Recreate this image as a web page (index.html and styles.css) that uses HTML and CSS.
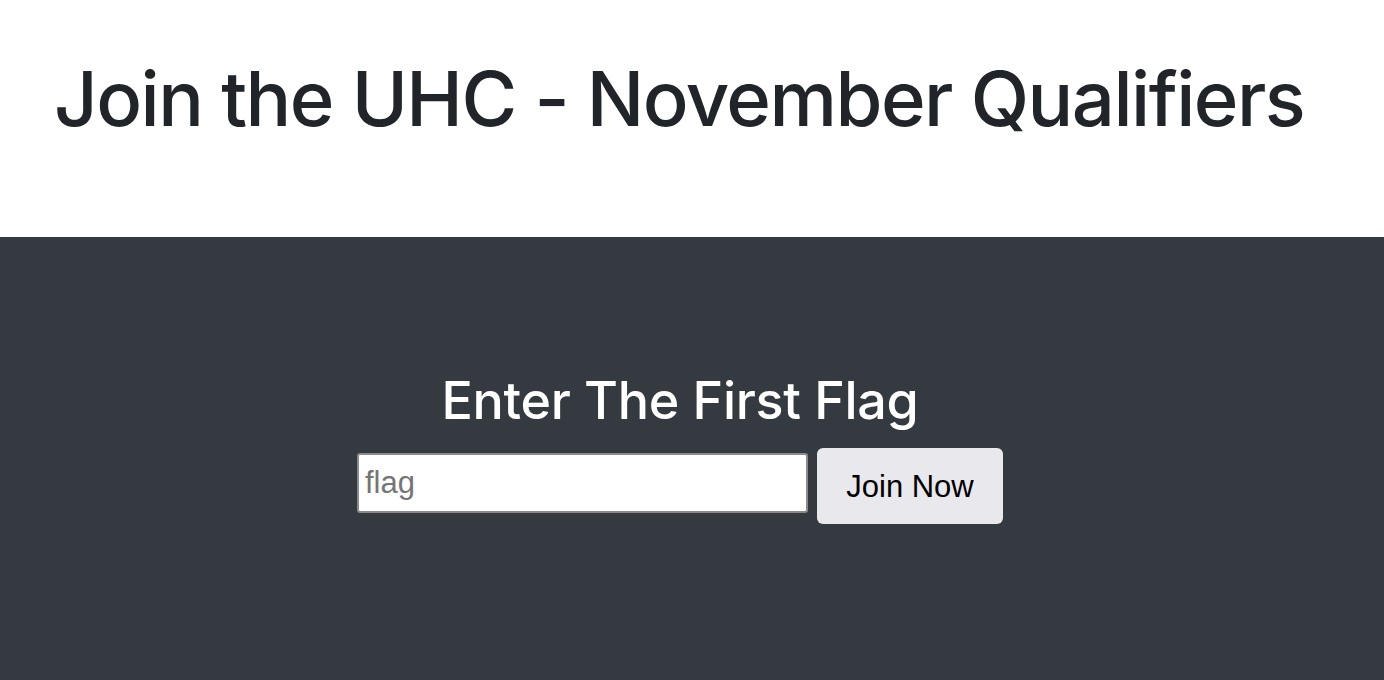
FILE: index.html
```html
<!DOCTYPE html>
<html>
<head>
<meta charset="utf-8">
<link rel="stylesheet" href="styles.css">
</head>
<body>
<header class="top">
  <h1 class="title">Join the UHC - November Qualifiers</h1>
</header>
<section class="band">
  <h2 class="prompt">Enter The First Flag</h2>
  <form class="form">
    <input class="field" type="text" placeholder="flag">
    <button class="btn" type="button">Join Now</button>
  </form>
</section>
</body>
</html>
```
FILE: styles.css
```css
html, body {
  margin: 0;
  padding: 0;
  background: #fff;
  font-family: Inter, "Noto Sans", sans-serif;
}
.top {
  height: 237px;
  padding: 0 0 0 54px;
  box-sizing: border-box;
}
.title {
  margin: 0;
  padding-top: 60px;
  font-size: 76px;
  font-weight: 500;
  line-height: 1;
  color: #212529;
  letter-spacing: -1.52px;
  white-space: nowrap;
}
.band {
  background: #343a40;
  height: 443px;
  display: flex;
  flex-direction: column;
  align-items: center;
  padding: 133px 24px 0 0;
  box-sizing: border-box;
}
.prompt {
  margin: 0;
  font-size: 52px;
  font-weight: 500;
  line-height: 1.2;
  color: #fff;
  letter-spacing: -0.3px;
}
.form {
  display: flex;
  align-items: flex-start;
  gap: 9px;
  margin-top: 16px;
}
.field {
  width: 451px;
  height: 60px;
  margin-top: 5px;
  box-sizing: border-box;
  border: 2px solid #8a8a8e;
  border-radius: 3px;
  padding: 0 6px;
  font-family: "Liberation Sans", Arial, sans-serif;
  font-size: 31px;
  color: #000;
  background: #fff;
}
.field::placeholder {
  color: #757575;
}
.btn {
  width: 186px;
  height: 76px;
  border: none;
  border-radius: 6px;
  background: #e9e8ed;
  color: #000;
  font-family: "Liberation Sans", Arial, sans-serif;
  font-size: 31px;
  padding: 2px 0 0;
}
```
